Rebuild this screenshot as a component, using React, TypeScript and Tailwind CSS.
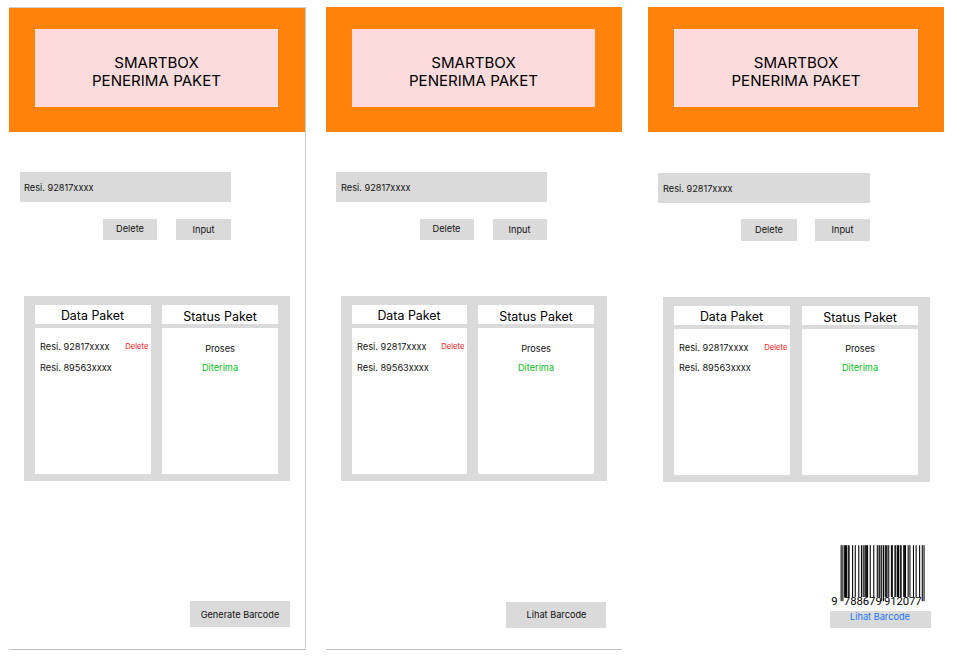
const L = ["0001101", "0011001", "0010011", "0111101", "0100011", "0110001", "0101111", "0111011", "0110111", "0001011"];

const invert = (code: string) => [...code].map((bit) => (bit === "1" ? "0" : "1")).join("");
const reverse = (code: string) => [...code].reverse().join("");

// EAN-13 left-half parity for a number starting with 9
const PARITY = "LGGLGL";

function encode(left: string, right: string) {
  const first = [...left].map((d, i) => (PARITY[i] === "L" ? L[+d] : reverse(invert(L[+d])))).join("");
  const second = [...right].map((d) => invert(L[+d])).join("");
  return `101${first}01010${second}101`;
}

function Barcode() {
  const modules = encode("788679", "912077");
  const step = 83.8 / 95;
  return (
    <svg width="101" height="66" viewBox="0 0 101 66" className="block font-['Roboto',sans-serif]">
      {[...modules].map((bit, i) => {
        const guard = i < 3 || i > 91 || (i > 44 && i < 50);
        return bit === "1" ? (
          <rect key={i} x={10.6 + i * step} y="0.2" width={step * 1.2} height={guard ? 56 : 51.8} fill="#000" />
        ) : null;
      })}
      <g fontSize="11.3" fill="#000">
        <text x="1.2" y="60.3" textLength="6.2">9</text>
        <text x="13.8" y="60.3" textLength="38">788679</text>
        <text x="54" y="60.3" textLength="37.5">912077</text>
      </g>
    </svg>
  );
}

type Skin = {
  frame: string;
  header: string;
  banner: string;
  input: string;
  actions: string;
  remove: string;
  insert: string;
  card: string;
  grid: string;
  second: string;
  status: string;
  footer: string;
};

function Phone({ skin, action, barcode }: { skin: Skin; action: string; barcode?: boolean }) {
  return (
    <section className={`flex h-[643px] shrink-0 flex-col ${skin.frame}`}>
      <header className={`shrink-0 bg-[#fd830a] ${skin.header}`}>
        <h1 className={`pt-[25px] text-center text-[15.1px] leading-[18px] text-black ${skin.banner} bg-[#fcdbdd]`}>
          SMARTBOX
          <br />
          PENERIMA PAKET
        </h1>
      </header>
      <div className={`flex shrink-0 items-center bg-[#dadada] pt-px ${skin.input}`}>Resi. 92817xxxx</div>
      <div className={`flex shrink-0 ${skin.actions}`}>
        <button className={`bg-[#dadada] pb-px ${skin.remove}`}>Delete</button>
        <button className={`bg-[#dadada] ${skin.insert}`}>Input</button>
      </div>
      <div className={`shrink-0 bg-[#dadada] ${skin.card}`}>
        <div className={`grid gap-y-1 ${skin.grid}`}>
          <h2 className="bg-white pr-px text-center text-[12.4px] leading-[22px] text-black">Data Paket</h2>
          <h2 className="bg-white text-center text-[12.5px] leading-[23px] text-black">Status Paket</h2>
          <div className="bg-white pt-[9px] pl-[5px]">
            <div className="flex h-5 items-center justify-between pr-[2.5px]">
              <span>Resi. 92817xxxx</span>
              <span className="text-[7.7px] text-[#fb2020]">Delete</span>
            </div>
            <div className={`flex items-center ${skin.second}`}>Resi. 89563xxxx</div>
          </div>
          <div className={`bg-white text-center ${skin.status}`}>
            <div className="h-[19px] leading-[19px]">Proses</div>
            <div className="h-[19px] leading-[19px] text-[#08bd1c]">Diterima</div>
          </div>
        </div>
      </div>
      {barcode ? (
        <div className={skin.footer}>
          <Barcode />
          <button className="h-[17px] w-[101px] bg-[#dadada] pr-px pb-[9px] text-[#2176f5]">{action}</button>
        </div>
      ) : (
        <button className={`shrink-0 bg-[#dadada] ${skin.footer}`}>{action}</button>
      )}
    </section>
  );
}

const generate: Skin = {
  frame: "w-[297px] border-t border-r border-b border-t-[#d0d0d0] border-r-[#cbcbcb] border-b-[#bdbdbd]",
  header: "h-[124px] w-[296px] pt-[21px] pl-[26px]",
  banner: "h-[78px] w-[243px]",
  input: "mt-[40px] ml-[11px] h-[30px] w-[211px] pl-[4px]",
  actions: "mt-[17px] ml-[94px] h-[21px] gap-[19px]",
  remove: "w-[54px]",
  insert: "w-[55px]",
  card: "mt-[56px] ml-[15px] h-[185px] w-[266px] pt-[9px] pl-[11px]",
  grid: "grid-cols-[116px_116px] grid-rows-[19px_146px] gap-x-[11px]",
  second: "h-[22px]",
  status: "pt-[11px]",
  footer: "mt-[120px] ml-[181px] h-[26px] w-[100px] pt-[2px]",
};

const view: Skin = {
  frame: "ml-[20px] w-[296px] border-b border-[#c3c3c3]",
  header: "h-[125px] w-[296px] pt-[22px] pl-[26px]",
  banner: "h-[78px] w-[243px]",
  input: "mt-[40px] ml-[10px] h-[30px] w-[211px] pl-[5px]",
  actions: "mt-[17px] ml-[94px] h-[21px] gap-[19px]",
  remove: "w-[54px] pr-px",
  insert: "w-[54px] pr-px",
  card: "mt-[56px] ml-[15px] h-[185px] w-[266px] pt-[9px] pl-[11px]",
  grid: "grid-cols-[115px_116px] grid-rows-[19px_146px] gap-x-[11px]",
  second: "h-[22px]",
  status: "pt-[11px]",
  footer: "mt-[121px] ml-[180px] h-[26px] w-[100px] pl-px",
};

const scanned: Skin = {
  frame: "ml-[26px] w-[296px]",
  header: "h-[125px] w-[296px] pt-[22px] pl-[26px]",
  banner: "h-[78px] w-[244px]",
  input: "mt-[41px] ml-[10px] h-[30px] w-[212px] pl-[5px]",
  actions: "mt-[16px] ml-[93px] h-[22px] gap-[18px]",
  remove: "w-[56px]",
  insert: "w-[55px]",
  card: "mt-[56px] ml-[15px] h-[185px] w-[267px] pt-[9px] pl-[11px]",
  grid: "grid-cols-[116px_116px] grid-rows-[19px_146px] gap-x-[12px]",
  second: "h-5",
  status: "pt-[10px]",
  footer: "mt-[63px] ml-[182px] flex w-[101px] flex-col",
};

export default function App() {
  return (
    <main className="flex h-[660px] w-[954px] overflow-hidden bg-white pt-[7px] pl-[9px] font-['Inter',sans-serif] text-[9.2px] leading-[12px] text-[#111]">
      <Phone skin={generate} action="Generate Barcode" />
      <Phone skin={view} action="Lihat Barcode" />
      <Phone skin={scanned} action="Lihat Barcode" barcode />
    </main>
  );
}
